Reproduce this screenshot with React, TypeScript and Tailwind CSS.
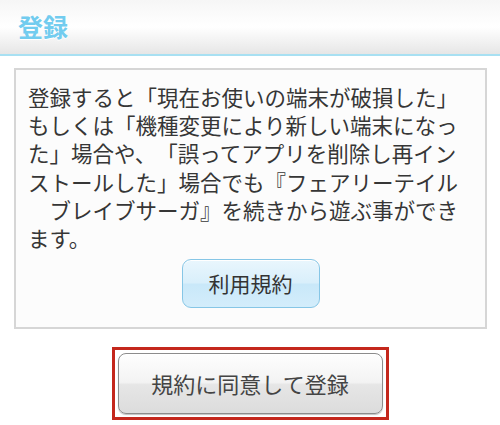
export default function App() {
  const lines = [
    "登録すると「現在お使いの端末が破損した」",
    "もしくは「機種変更により新しい端末になっ",
    "た」場合や、「誤ってアプリを削除し再イン",
    "ストールした」場合でも『フェアリーテイル",
    "\u3000ブレイブサーガ』を続きから遊ぶ事ができ",
    "ます。",
  ];

  return (
    <div
      className="min-h-[425px] bg-white [text-spacing-trim:space-all]"
      style={{ fontFamily: '"Noto Sans CJK JP", "Noto Sans", sans-serif' }}
    >
      {/* title bar */}
      <header className="h-[56px] border-b-2 border-[#a8e0f2] bg-gradient-to-b from-[#f6f6f6] via-[#ffffff] to-[#e6e6e6] px-[18px] pt-[8px]">
        <h1 className="text-[25px] font-bold leading-[36px] text-[#72ccef] [text-shadow:0_1px_0_#ffffff]">
          登録
        </h1>
      </header>

      {/* notice */}
      <section className="mx-[14px] mt-[12px] mr-[13px] border-2 border-[#d6d6d6] bg-[#fcfcfc] px-[12px] pt-[13px] pb-[19px]">
        <p className="whitespace-nowrap text-[21.5px] leading-[28.2px] text-[#363636]">
          {lines.map((line, i) => (
            <span key={i} className="block">
              {line}
            </span>
          ))}
        </p>
        <div className="mt-[7px] flex justify-center">
          <button className="h-[49px] w-[138px] rounded-[9px] border border-[#86c6e6] bg-[linear-gradient(to_bottom,#e9f6fd_0%,#d9effb_48%,#c9e8f9_52%,#d3edfb_100%)] text-[21px] text-[#333333] shadow-[inset_0_1px_0_#ffffff]">
            利用規約
          </button>
        </div>
      </section>

      {/* agree button */}
      <div className="mx-auto mt-[18px] w-[277px] border-[3px] border-[#c4271c] p-[3px]">
        <button className="flex h-[61px] w-full items-center justify-center rounded-[8px] border border-[#8c8c8c] bg-[linear-gradient(to_bottom,#fefefe_0%,#f3f3f3_48%,#e6e6e6_52%,#dcdcdc_100%)] text-[22px] text-[#444444] shadow-[inset_0_1px_0_#ffffff,0_1px_1px_rgba(0,0,0,0.25)]">
          規約に同意して登録
        </button>
      </div>
    </div>
  );
}
